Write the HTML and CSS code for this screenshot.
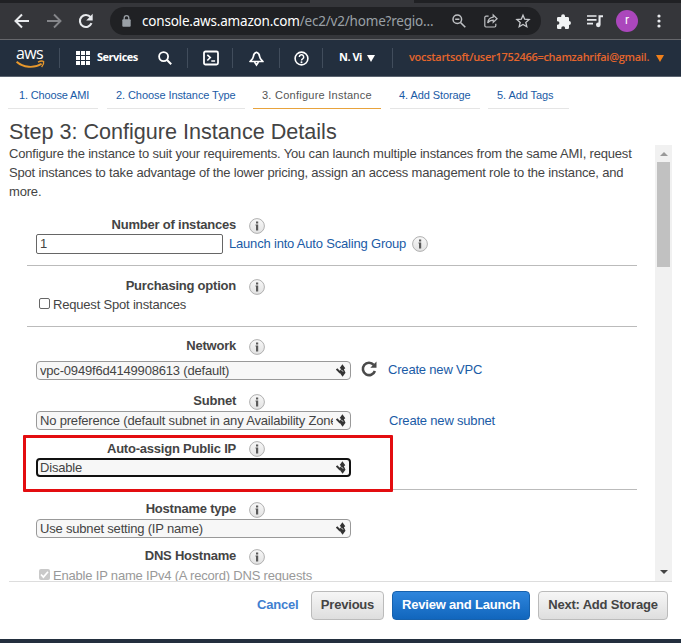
FILE: index.html
```html
<!DOCTYPE html>
<html lang="en">
<head>
<meta charset="utf-8">
<title>Launch instance wizard</title>
<link rel="stylesheet" href="styles.css">
</head>
<body>
<svg class="defs" width="0" height="0" aria-hidden="true">
  <defs>
    <linearGradient id="ig" x1="0" y1="0" x2="0" y2="1"><stop offset="0" stop-color="#f8f8f8"/><stop offset="1" stop-color="#e2e2e2"/></linearGradient>
    <symbol id="info" viewBox="0 0 16 16"><circle cx="8" cy="8" r="7.400" fill="url(#ig)" stroke="#b0b0b0"/><path d="M7 3.600h2.200v1.900H7zM6.500 6.500h2.700v6H7V7.600h-.5z" fill="#5a5a5a"/></symbol>
    <symbol id="arrows" viewBox="0 0 10 13"><path d="M.6 5 4.400 8.800" stroke="#333" stroke-width="2"/><path d="M6.400.3 9.300 4.200 7.900 5.200 9.500 8.800 6.600 12.700 4.200 9.500 3.800 6.800 5.200 5 3.700 4z" fill="#333"/><path d="m5.300 6.200 2 1.200" stroke="#ddd" stroke-width=".9"/></symbol>
  </defs>
</svg>
<div class="strip"><span class="active-tab"></span></div>
<header class="browser">
  <svg class="ic back" viewBox="0 0 16 16"><path d="M15 8H2M8 1.500 1.500 8 8 14.500" fill="none" stroke="#e8eaed" stroke-width="2"/></svg>
  <svg class="ic fwd" viewBox="0 0 16 16"><path d="M1 8h13M8 1.500 14.500 8 8 14.500" fill="none" stroke="#85868a" stroke-width="1.900"/></svg>
  <svg class="ic reload" viewBox="0 0 16 16"><path d="M13.500 10.200A6 6 0 1 1 12.600 4.200" fill="none" stroke="#e8eaed" stroke-width="2.100"/><path d="M14.700.8v6.600H8.200z" fill="#e8eaed"/></svg>
  <div class="omnibox">
    <svg class="lock" viewBox="0 0 9 12"><path d="M2.200 5V3a2.300 2.300 0 0 1 4.600 0v2" fill="none" stroke="#9aa0a6" stroke-width="1.300"/><rect x=".3" y="4.300" width="8.400" height="7.400" rx="1" fill="#9aa0a6"/></svg>
    <span class="url"><b>console.aws.amazon.com</b>/ec2/v2/home?regio...</span>
    <svg class="oi zoom" viewBox="0 0 14 14"><circle cx="5.300" cy="5.300" r="4.300" fill="none" stroke="#bfc1c4" stroke-width="1.500"/><path d="M3.200 5.300h4.200M8.500 8.500l4.800 4.800" stroke="#bfc1c4" stroke-width="1.600"/></svg>
    <svg class="oi share" viewBox="0 0 14 14"><path d="M4.600 2.200H2a1.200 1.200 0 0 0-1.200 1.200v8.400A1.200 1.200 0 0 0 2 13h8.600a1.200 1.200 0 0 0 1.200-1.200V9.700M9.200 1l3.900 3.700-3.900 3.600V6.200C6.600 6.200 4.800 7.300 3.700 9c.3-3 2.200-5.400 5.500-5.800z" fill="none" stroke="#bfc1c4" stroke-width="1.200"/></svg>
    <svg class="oi star" viewBox="0 0 14 14"><path d="m7 1.200 1.700 4 4.400.4-3.300 2.900 1 4.200L7 10.500l-3.800 2.200 1-4.200L.9 5.600l4.400-.4z" fill="none" stroke="#c8cacd" stroke-width="1.300"/></svg>
  </div>
  <svg class="ic puzzle" viewBox="0 0 15 15"><path d="M1 4.200a1.300 1.300 0 0 1 1.300-1.300h2.900v-.8a1.900 1.900 0 0 1 3.800 0v.8h2.700A1.300 1.300 0 0 1 13 4.200v2.900a1.900 1.900 0 0 1 0 3.900v2.700a1.300 1.300 0 0 1-1.300 1.300H9.100v-.9a1.900 1.900 0 0 0-3.800 0v.9h-3A1.300 1.300 0 0 1 1 13.700v-2.900h.6a1.800 1.800 0 0 0 0-3.600H1z" fill="#f1f3f4"/></svg>
  <svg class="ic music" viewBox="0 0 16 14"><path d="M0 2h9.500M0 5.800h9.500M0 9.600h6" stroke="#e8eaed" stroke-width="1.700"/><path d="M11.500 1.200H16v2h-2.400v7.600a2.300 2.300 0 1 1-2.100-2.200z" fill="#e8eaed"/></svg>
  <span class="avatar">r</span>
  <svg class="ic dots" viewBox="0 0 4 14"><g fill="#e8eaed"><circle cx="2" cy="2" r="1.600"/><circle cx="2" cy="7" r="1.600"/><circle cx="2" cy="12" r="1.600"/></g></svg>
</header>
<nav class="aws">
  <div class="logo"><span>aws</span>
    <svg viewBox="0 0 29 8"><path d="M.6.8C7 6.600 18 7.600 25.600 2.800" fill="none" stroke="#e8982c" stroke-width="1.900"/><path d="M22 1.100c2.200-1.100 4.500-1.200 5.600-.6.400 1.600-.5 3.900-2 5.500" fill="none" stroke="#e8982c" stroke-width="1.400"/></svg>
  </div>
  <i class="sep s1"></i>
  <svg class="grid" viewBox="0 0 14 14"><path d="M0 0h4v4H0zM5 0h4v4H5zM10 0h4v4h-4zM0 5h4v4H0zM5 5h4v4H5zM10 5h4v4h-4zM0 10h4v4H0zM5 10h4v4H5zM10 10h4v4h-4z" fill="#fff"/></svg>
  <span class="services">Services</span>
  <svg class="search" viewBox="0 0 14 14"><circle cx="5.600" cy="5.600" r="4.500" fill="none" stroke="#fff" stroke-width="1.800"/><path d="m8.800 8.800 4.400 4.400" stroke="#fff" stroke-width="2"/></svg>
  <i class="sep s2"></i>
  <svg class="shell" viewBox="0 0 16 16"><rect x="1" y="1.500" width="14" height="13" rx="1.500" fill="none" stroke="#fff" stroke-width="1.800"/><path d="m4.300 4.800 3 2.800-3 2.900M8.300 11h3.800" fill="none" stroke="#fff" stroke-width="1.600"/></svg>
  <i class="sep s3"></i>
  <svg class="bell" viewBox="0 0 15 15"><path d="M7.500 1.300C5.200 1.900 4.600 3.600 4.400 5.500 4.200 7.700 2.500 9 1 10.500h13c-1.500-1.500-3.200-2.800-3.400-5-.2-1.900-.8-3.600-3.100-4.200z" fill="none" stroke="#fff" stroke-width="1.700" stroke-linejoin="round"/><path d="M5.500 11 7.500 14l2-3" fill="none" stroke="#fff" stroke-width="1.600"/></svg>
  <i class="sep s4"></i>
  <svg class="help" viewBox="0 0 15 15"><circle cx="7.500" cy="7.500" r="6.400" fill="none" stroke="#fff" stroke-width="1.600"/><path d="M5.300 6a2.200 2.200 0 1 1 3.300 1.900c-.9.5-1.100.8-1.100 1.500" fill="none" stroke="#fff" stroke-width="1.500"/><circle cx="7.500" cy="11.200" r="1" fill="#fff"/></svg>
  <i class="sep s5"></i>
  <span class="region">N. Vi</span><i class="caret white"></i>
  <i class="sep s6"></i>
  <span class="account">vocstartsoft/user1752466=chamzahrifai@gmail.</span><i class="caret orange"></i>
</nav>
<main>
  <ol class="steps">
    <li class="w1"><span>1. Choose AMI</span></li>
    <li class="w2"><span>2. Choose Instance Type</span></li>
    <li class="w3 current"><span>3. Configure Instance</span></li>
    <li class="w4"><span>4. Add Storage</span></li>
    <li class="w5"><span>5. Add Tags</span></li>
  </ol>
  <h1><span>Step 3: Configure Instance Details</span></h1>
  <div class="viewport">
    <div class="content">
      <p class="intro">Configure the instance to suit your requirements. You can launch multiple instances from the same AMI, request<br>Spot instances to take advantage of the lower pricing, assign an access management role to the instance, and<br>more.</p>
      <form>
        <section class="g-count">
          <div class="label"><b>Number of instances</b><svg><use href="#info"/></svg></div>
          <div class="field"><span class="number">1</span><a class="asg">Launch into Auto Scaling Group</a><svg class="info"><use href="#info"/></svg></div>
        </section>
        <section class="g-buy">
          <div class="label"><b>Purchasing option</b><svg><use href="#info"/></svg></div>
          <div class="check"><i class="box"></i><span>Request Spot instances</span></div>
        </section>
        <section class="g-net">
          <div class="label"><b>Network</b><svg><use href="#info"/></svg></div>
          <div class="field"><div class="select"><span>vpc-0949f6d4149908613 (default)</span><svg><use href="#arrows"/></svg></div>
            <svg class="refresh" viewBox="0 0 16 16"><path d="M13.900 10A6.200 6.200 0 1 1 12.700 3.800" fill="none" stroke="#4a4a4a" stroke-width="2.600"/><path d="M15.500.6v6.200H9.300z" fill="#4a4a4a"/></svg>
            <a class="vpc">Create new VPC</a></div>
          <div class="label subnet"><b>Subnet</b><svg><use href="#info"/></svg></div>
          <div class="field"><div class="select"><span>No preference (default subnet in any Availability Zone)</span><svg><use href="#arrows"/></svg></div><a class="sub">Create new subnet</a></div>
          <div class="label autoip"><b>Auto-assign Public IP</b><svg><use href="#info"/></svg></div>
          <div class="field"><div class="select focus"><span>Disable</span><svg><use href="#arrows"/></svg></div></div>
          <div class="highlight"></div>
        </section>
        <section class="g-host">
          <div class="label"><b>Hostname type</b><svg><use href="#info"/></svg></div>
          <div class="field"><div class="select"><span>Use subnet setting (IP name)</span><svg><use href="#arrows"/></svg></div></div>
          <div class="label dns"><b>DNS Hostname</b><svg><use href="#info"/></svg></div>
          <div class="check disabled"><svg class="box" viewBox="0 0 11 11"><path d="m2 5.500 2.400 2.600L9 2.700" fill="none" stroke="#fff" stroke-width="1.700"/></svg><span>Enable IP name IPv4 (A record) DNS requests</span></div>
        </section>
      </form>
    </div>
    <div class="scrollbar"><i class="up"></i><i class="thumb"></i><i class="down"></i></div>
  </div>
  <footer>
    <a class="cancel">Cancel</a>
    <button class="prev">Previous</button>
    <button class="primary">Review and Launch</button>
    <button class="next">Next: Add Storage</button>
  </footer>
</main>
<div class="bottom"></div>
</body>
</html>
```
FILE: styles.css
```css
* { box-sizing: border-box; }
body { margin: 0; width: 681px; height: 643px; overflow: hidden; display: flex; flex-direction: column; background: #fff; color: #444; font: 13px/19px "Liberation Sans", Arial, sans-serif; letter-spacing: -.19px; }
svg { display: block; flex: none; overflow: visible; }
.defs { position: absolute; }
i { display: block; flex: none; }
span, a, b { white-space: nowrap; flex: none; }
a { color: #1a5ba6; }

.strip { height: 3px; background: #202124; flex: none; padding-left: 310px; }
.active-tab { display: block; width: 104px; height: 3px; background: #35363a; }
.browser { height: 37px; flex: none; display: flex; align-items: center; background: #35363a; border-bottom: 1px solid #66676b; padding-left: 14px; }
.ic { width: 16px; height: 16px; }
.fwd { margin-left: 16px; }
.reload { margin-left: 16px; }
.omnibox { width: 431px; height: 28px; margin-left: 16px; border-radius: 14px; background: #202124; display: flex; align-items: center; padding-left: 12px; flex: none; }
.lock { width: 9px; height: 12px; }
.url { width: 300px; margin-left: 11px; color: #9aa0a6; font: 13.500px/20px "Noto Sans", "Open Sans", sans-serif; letter-spacing: -.2px; }
.url b { font-weight: 400; color: #fff; }
.oi { width: 14px; height: 14px; }
.zoom { margin-left: 10px; }
.share { margin-left: 18px; }
.star { margin-left: 18px; }
.puzzle { width: 15px; height: 15px; margin-left: 15px; }
.music { height: 14px; margin-left: 16px; }
.avatar { width: 22px; height: 22px; margin-left: 13px; border-radius: 50%; background: #ab47bc; color: #fff; font: 12px/21px Roboto, sans-serif; text-align: center; }
.dots { width: 4px; height: 14px; margin-left: 19px; }

.aws { height: 37px; flex: none; display: flex; align-items: center; background: #232f3e; border-bottom: 1px solid #5b6470; color: #fff; font: 700 11px/16px "Open Sans", "Noto Sans", sans-serif; }
.logo { width: 29px; margin-left: 16px; }
.logo span { display: block; height: 13px; font: 500 16px/10px "Open Sans", sans-serif; letter-spacing: -.7px; }
.logo svg { width: 29px; height: 8px; }
.sep { width: 1px; height: 20px; background: #414d5c; }
.s1 { margin-left: 14px; }
.grid { width: 14px; height: 14px; margin-left: 16px; }
.services { width: 41px; margin-left: 7px; letter-spacing: -.5px; line-height: 18px; margin-top: -2px; }
.search { width: 14px; height: 14px; margin-left: 20px; }
.s2 { margin-left: 15px; }
.shell { width: 16px; height: 16px; margin-left: 15px; }
.s3 { margin-left: 13px; }
.bell { width: 15px; height: 15px; margin-left: 16px; }
.s4 { margin-left: 15px; }
.help { width: 15px; height: 15px; margin-left: 14px; }
.s5 { margin-left: 13px; }
.region { width: 23px; margin-left: 16px; letter-spacing: -.5px; margin-top: -2px; }
.caret { border: 4px solid transparent; border-bottom: 0; border-top: 7px solid #fff; margin-left: 5px; }
.s6 { margin-left: 17px; }
.account { width: 240px; margin-left: 16px; color: #e5652c; font-weight: 600; letter-spacing: -.29px; margin-top: -2px; }
.orange { border-top-color: #ef7f1a; margin-left: 7px; }

main { height: 562px; flex: none; }
.steps { display: flex; list-style: none; margin: 0; padding: 9px 0 0 8px; height: 32px; font-size: 11px; letter-spacing: -.08px; }
.steps li { height: 23px; padding-left: 10px; border-bottom: 1px solid #e5e5e5; color: #1a5ba6; }
.steps .w1 { width: 90px; padding-left: 11px; letter-spacing: -.16px; }
.steps .w2 { width: 138px; margin-left: 9px; padding-left: 9px; }
.w3 { width: 128px; margin-left: 8px; }
.w4 { width: 90px; margin-left: 9px; }
.w5 { width: 81px; margin-left: 8px; }
.steps .w4, .steps .w5, .steps .w3 { padding-left: 9px; }
.steps .current { color: #555; border-color: #e8a33d; letter-spacing: .25px; }
h1 { margin: 0; height: 36px; padding: 11px 0 0 9px; font-size: 21.600px; font-weight: 400; line-height: 24px; letter-spacing: 0; }
.viewport { height: 436px; display: flex; overflow: hidden; position: relative; }
.content { width: 655px; padding-left: 9px; }
.intro { margin: -1px 0 1px; height: 57px; white-space: nowrap; letter-spacing: -.18px; }
form { margin-left: 18px; width: 610px; padding-top: 13px; }
section { border-bottom: 1px solid #bbb; }
.label { display: flex; height: 19px; }
.label b { width: 209px; text-align: right; letter-spacing: -.22px; }
.label svg { width: 16px; height: 16px; margin: 3px 0 0 13px; }
.field { display: flex; height: 20px; padding-left: 9px; }
.g-count { height: 51px; }
.g-buy { height: 61px; padding-top: 10px; }
.g-net { height: 163px; padding-top: 9px; position: relative; }
.g-host { height: 100px; padding-top: 9px; border: 0; }
.number { width: 187px; height: 20px; border: 1px solid #666; border-radius: 2px; padding-left: 3px; line-height: 18px; }
.asg { margin-left: 6px; line-height: 20px; width: 177px; }
.info { width: 16px; height: 16px; margin: 2px 0 0 6px; }
.check { display: flex; height: 20px; padding-left: 12px; }
.box { width: 11px; height: 11px; margin-top: 3px; border: 1px solid #666; border-radius: 2px; }
.check span { margin-left: 3px; }
.select { width: 315px; height: 19px; display: flex; border: 1px solid #999; border-radius: 4px; background: #f7f7f7; padding-left: 3px; line-height: 17px; flex: none; }
.select span { width: 293px; overflow: hidden; }
.select svg { width: 10px; height: 13px; margin: 2px 0 0 3px; }
.focus { border: 2px solid #111; padding-left: 2px; line-height: 16px; }
.focus svg { margin-top: 1px; }
.g-net .field { margin-top: 6px; }
.refresh { width: 16px; height: 16px; margin: 0 0 0 10px; }
.vpc { margin-left: 11px; line-height: 17px; }
.sub { margin-left: 38px; line-height: 19px; }
.subnet { margin-top: 10px; }
.g-net .subnet + .field { margin-top: 1px; }
.autoip { margin-top: 8px; }
.g-net .autoip + .field { margin-top: 0; }
.autoip svg { margin-top: 2px; }
.highlight { position: absolute; left: -4px; top: 108px; width: 370px; height: 57px; border: 3px solid #e30d10; border-radius: 1px; }
.g-host .field { margin-top: 1px; }
.dns { margin-top: 7px; }
.disabled { color: #999; margin-top: 1px; }
.disabled .box { border: 0; background: #c9c9c9; }
.scrollbar { width: 17px; background: #f1f1f1; display: flex; flex-direction: column; align-items: center; }
.up { border: 4px solid transparent; border-top: 0; border-bottom-color: #999; margin-top: 7px; }
.thumb { width: 13px; height: 105px; margin-top: 6px; background: #c1c1c1; }
.down { border: 4px solid transparent; border-bottom: 0; border-top-color: #444; margin: auto 0 7px; }
footer { height: 58px; margin-left: 9px; width: 663px; border-top: 1px solid #ddd; display: flex; padding-top: 9px; }
.cancel { margin-left: 248px; width: 42px; color: #3f7fd0; font-weight: 700; line-height: 27px; }
button { height: 29px; padding: 0 0 2px; border: 1px solid #bbb; border-radius: 4px; background: linear-gradient(#f6f6f6, #dedede); color: #444; font: 700 13px/20px "Liberation Sans", Arial, sans-serif; letter-spacing: -.2px; white-space: nowrap; }
.prev { width: 73px; margin-left: 12px; }
.primary { width: 138px; margin-left: 8px; background: linear-gradient(#2e85dc, #1166bd); border-color: #1661ad; color: #fff; }
.next { width: 130px; margin-left: 8px; }
.bottom { height: 4px; background: #232f3e; flex: none; }
```
